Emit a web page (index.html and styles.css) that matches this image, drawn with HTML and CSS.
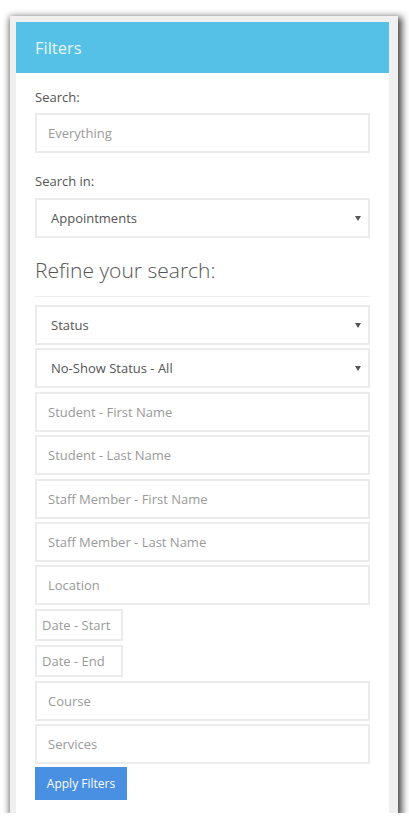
FILE: index.html
```html
<!DOCTYPE html>
<html>
<head>
<meta charset="utf-8">
<link rel="stylesheet" href="styles.css">
</head>
<body>
<div class="frame">
  <div class="panel">
    <div class="panel-head">Filters</div>
    <div class="panel-body">
      <label class="label">Search:</label>
      <input class="field" type="text" placeholder="Everything">
      <label class="label label-gap">Search in:</label>
      <div class="select-wrap">
        <select class="field select"><option>Appointments</option></select>
        <span class="caret"></span>
      </div>
      <h3 class="refine">Refine your search:</h3>
      <hr class="rule">
      <div class="stack">
        <div class="select-wrap">
          <select class="field select"><option>Status</option></select>
          <span class="caret"></span>
        </div>
        <div class="select-wrap">
          <select class="field select"><option>No-Show Status - All</option></select>
          <span class="caret"></span>
        </div>
        <input class="field" type="text" placeholder="Student - First Name">
        <input class="field" type="text" placeholder="Student - Last Name">
        <input class="field" type="text" placeholder="Staff Member - First Name">
        <input class="field" type="text" placeholder="Staff Member - Last Name">
        <input class="field" type="text" placeholder="Location">
        <input class="field date" type="text" placeholder="Date - Start">
        <input class="field date" type="text" placeholder="Date - End">
        <input class="field" type="text" placeholder="Course">
        <input class="field" type="text" placeholder="Services">
        <button class="apply" type="button">Apply Filters</button>
      </div>
    </div>
  </div>
</div>
</body>
</html>
```

FILE: styles.css
```css
html, body {
  margin: 0;
  padding: 0;
  background: #ffffff;
}
body {
  font-family: "Open Sans", "Liberation Sans", sans-serif;
  color: #555555;
}
.frame {
  box-sizing: border-box;
  margin: 16px 0 0 10px;
  width: 388px;
  height: 797px;
  padding: 6px 9px 0 6px;
  background: #f0f0f0;
  box-shadow: 2px 3px 7px 2px rgba(0, 0, 0, 0.72);
}
.panel {
  background: #ffffff;
  height: 100%;
}
.panel-head {
  height: 51px;
  line-height: 52px;
  padding-left: 19px;
  background: #56c1e6;
  color: #e6f6fc;
  font-size: 16.5px;
}
.panel-body {
  padding: 14px 19px 0 19px;
  display: flex;
  flex-direction: column;
}
.label {
  display: block;
  font-size: 13px;
  line-height: 20px;
  margin-bottom: 6px;
  color: #555555;
}
.label-gap {
  margin-top: 18px;
  margin-bottom: 7px;
}
.field {
  box-sizing: border-box;
  display: block;
  width: 100%;
  height: 40px;
  margin: 0;
  padding: 0 11px;
  border: 2px solid #ebebeb;
  border-radius: 0;
  background: #ffffff;
  font-family: "Open Sans", "Liberation Sans", sans-serif;
  font-size: 13px;
  color: #555555;
  outline: none;
}
.field::placeholder {
  color: #9a9a9a;
  opacity: 1;
}
.select-wrap {
  position: relative;
}
.select {
  appearance: none;
  -webkit-appearance: none;
  padding-left: 14px;
}
.caret {
  position: absolute;
  right: 9px;
  top: 18px;
  width: 0;
  height: 0;
  border-left: 3px solid transparent;
  border-right: 3px solid transparent;
  border-top: 5px solid #555555;
}
.refine {
  margin: 17px 0 0 0;
  font-size: 21px;
  line-height: 30px;
  font-weight: 300;
  color: #555555;
}
.rule {
  margin: 11px 0 8px 0;
  border: 0;
  border-top: 1px solid #eeeeee;
  height: 0;
}
.stack {
  display: flex;
  flex-direction: column;
  gap: 3.4px;
  align-items: stretch;
}
.date {
  width: 88px;
  height: 32.5px;
  padding: 0 5px;
}
.apply {
  align-self: flex-start;
  height: 33px;
  width: 92px;
  padding: 0;
  border: 0;
  border-radius: 0;
  background: #4a90e2;
  color: #ffffff;
  font-family: "Open Sans", "Liberation Sans", sans-serif;
  font-size: 12px;
}
```
